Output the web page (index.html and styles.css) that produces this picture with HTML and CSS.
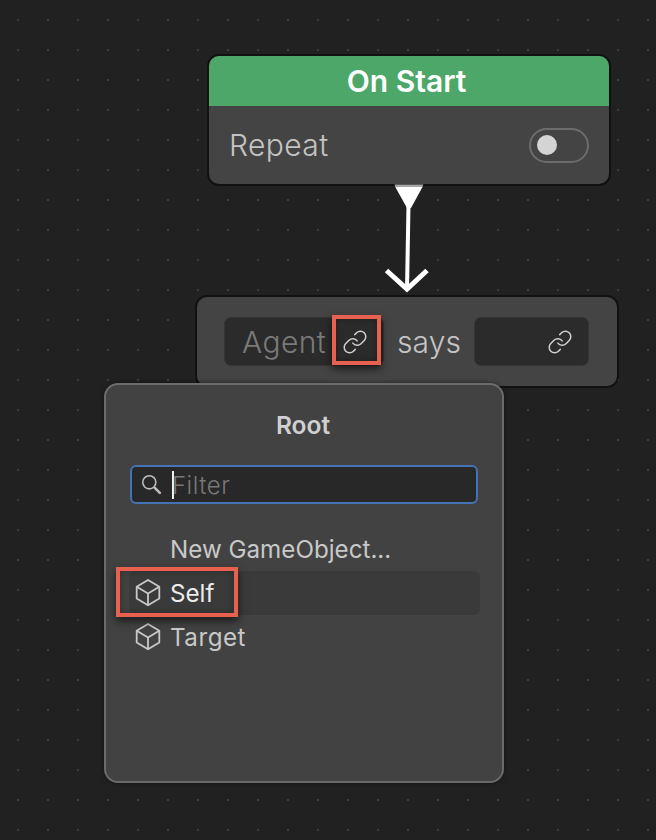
FILE: index.html
```html
<!DOCTYPE html>
<html lang="en">
<head>
<meta charset="utf-8">
<title>Behavior graph</title>
<link rel="stylesheet" href="styles.css">
</head>
<body>
<main class="canvas">
  <section class="node node-start">
    <header class="node-title">On Start</header>
    <div class="node-row">
      <span class="node-label">Repeat</span>
      <span class="toggle"><span class="toggle-knob"></span></span>
    </div>
  </section>

  <svg class="edge" width="70" height="125" viewBox="0 0 70 125" aria-hidden="true">
    <path class="port-top" d="M24.500 9.500H53.300L52.500 12H25.300Z"/>
    <path class="port" d="M25.300 12H52.500L41 33H37Z"/>
    <path class="edge-line" d="M38.500 30L37 115"/>
    <path class="edge-head" d="M16.500 95.500L37 114L57 95.500"/>
  </svg>

  <section class="node node-say">
    <div class="field field-agent">
      <span class="field-text">Agent</span>
      <svg class="link-icon" viewBox="0 0 24 24" aria-hidden="true"><path d="M10 13a5 5 0 0 0 7.540.540l3-3a5 5 0 0 0-7.070-7.070l-1.720 1.710"/><path d="M14 11a5 5 0 0 0-7.540-.540l-3 3a5 5 0 0 0 7.070 7.070l1.710-1.710"/></svg>
    </div>
    <span class="node-label say-label">says</span>
    <div class="field field-says">
      <svg class="link-icon" viewBox="0 0 24 24" aria-hidden="true"><path d="M10 13a5 5 0 0 0 7.540.540l3-3a5 5 0 0 0-7.070-7.070l-1.720 1.710"/><path d="M14 11a5 5 0 0 0-7.540-.540l-3 3a5 5 0 0 0 7.070 7.070l1.710-1.710"/></svg>
    </div>
  </section>

  <section class="popup">
    <h2 class="popup-title">Root</h2>
    <div class="filter">
      <svg class="search-icon" viewBox="0 0 24 24" aria-hidden="true"><circle cx="9.500" cy="9.500" r="7.500"/><path class="search-handle" d="M15.500 15.500L21.500 21.500"/></svg>
      <span class="caret"></span>
      <span class="filter-text">Filter</span>
    </div>
    <ul class="list">
      <li class="list-item"><span class="item-icon"></span>New GameObject...</li>
      <li class="list-item is-hover">
        <svg class="item-icon" viewBox="0 0 28 28" aria-hidden="true"><path d="M13 1L24.300 7.700V19.500L13 26.300L1.700 19.500V7.700Z"/><path d="M1.700 7.700L13 14.500L24.300 7.700M13 14.500V26.300"/></svg>
        <span class="item-bright">Self</span>
      </li>
      <li class="list-item">
        <svg class="item-icon" viewBox="0 0 28 28" aria-hidden="true"><path d="M13 1L24.300 7.700V19.500L13 26.300L1.700 19.500V7.700Z"/><path d="M1.700 7.700L13 14.500L24.300 7.700M13 14.500V26.300"/></svg>
        <span class="item-wide">Target</span>
      </li>
    </ul>
  </section>

  <div class="mark mark-link"></div>
  <div class="mark mark-self"></div>
</main>
</body>
</html>
```
FILE: styles.css
```css
* { box-sizing: border-box; }
html, body { margin: 0; height: 100%; }
body {
  background-color: #212121;
  font-family: Inter, "Liberation Sans", sans-serif;
  overflow: hidden;
}
.canvas {
  position: relative;
  width: 656px;
  height: 840px;
  background-image: radial-gradient(circle at 18px 20px, #3e3e3e 0.9px, transparent 1.1px);
  background-size: 30px 30px;
}
.node {
  position: absolute;
  background: #444444;
  border: 2px solid #111111;
  border-radius: 12px;
}
.node-start { left: 207px; top: 54px; width: 404px; height: 132px; overflow: hidden; }
.node-title {
  height: 50px;
  padding-right: 5px;
  background: #4ca768;
  color: #ffffff;
  font-size: 30px;
  font-weight: 600;
  display: flex;
  align-items: center;
  justify-content: center;
}
.node-row {
  display: flex;
  align-items: center;
  justify-content: space-between;
  height: 78px;
  padding: 0 20px;
}
.node-label {
  color: #c4c4c4;
  font-size: 30px;
  font-weight: 300;
  letter-spacing: 0.4px;
}
.toggle {
  display: flex;
  align-items: center;
  width: 60px;
  height: 35px;
  padding-left: 6px;
  border: 2px solid #6c6c6c;
  border-radius: 18px;
}
.toggle-knob { width: 20px; height: 20px; border-radius: 50%; background: #d4d4d4; }
.edge { position: absolute; left: 370px; top: 175px; }
.port-top { fill: #a8a8a8; }
.port { fill: #ffffff; }
.edge-line { stroke: #ffffff; stroke-width: 4px; fill: none; }
.edge-head { stroke: #ffffff; stroke-width: 5px; fill: none; }
.node-say {
  left: 195px;
  top: 295px;
  width: 424px;
  height: 93px;
  display: flex;
  align-items: center;
  padding: 0 28px 0 27px;
}
.field {
  display: flex;
  align-items: center;
  height: 49px;
  background: #2b2b2b;
  border: 1px solid #353535;
  border-radius: 7px;
}
.field-agent { width: 160px; padding: 0 15px 0 17px; justify-content: space-between; }
.field-says { width: 115px; margin-left: auto; padding-right: 15px; justify-content: flex-end; }
.field-text { color: #7a7a7a; font-size: 30px; font-weight: 300; letter-spacing: 0.4px; }
.say-label { margin-left: 13px; letter-spacing: 0.1px; }
.link-icon { width: 26px; height: 26px; fill: none; stroke: #cfcfcf; stroke-width: 1.400; stroke-linecap: round; stroke-linejoin: round; }
.popup {
  position: absolute;
  left: 104px;
  top: 383px;
  width: 400px;
  height: 400px;
  background: #424242;
  border: 2px solid #6b6b6b;
  border-radius: 14px;
  box-shadow: 0 0 4px rgba(0, 0, 0, 0.5);
  padding: 0 23px;
}
.popup-title {
  margin: 25px 2px 0 0;
  height: 30px;
  line-height: 30px;
  text-align: center;
  font-size: 24.500px;
  font-weight: 600;
  color: #d0d0d0;
}
.filter {
  display: flex;
  align-items: center;
  margin: 25px 1px 0 1px;
  width: 348px;
  height: 39px;
  padding-left: 9px;
  background: #282828;
  border: 2px solid #4473b3;
  border-radius: 6px;
}
.search-icon { width: 21px; height: 21px; fill: none; stroke: #bdbdbd; stroke-width: 1.800; stroke-linecap: round; }
.search-handle { stroke-width: 3px; }
.caret { width: 2px; height: 28px; margin-left: 10px; background: #f0f0f0; }
.filter-text { margin: 2px 0 0 -2px; color: #787878; font-size: 24px; font-weight: 300; letter-spacing: 0.5px; }
.list { list-style: none; margin: 23px 0 0; padding: 0; }
.list-item {
  display: flex;
  align-items: center;
  height: 44px;
  width: 351px;
  padding-left: 6px;
  font-size: 24.200px;
  font-weight: 400;
  color: #c8c8c8;
  border-radius: 6px;
}
.list-item.is-hover { background: #3a3a3a; }
.item-bright { color: #ececec; }
.item-wide { letter-spacing: 0.5px; }
.item-icon { flex: none; width: 28px; height: 28px; margin-right: 7px; fill: none; stroke: #c8c8c8; stroke-width: 1.800; stroke-linejoin: round; }
.mark {
  position: absolute;
  border: 4px solid #e8604f;
  box-shadow: 0 4px 8px rgba(0, 0, 0, 0.6), inset 0 0 6px rgba(0, 0, 0, 0.3);
}
.mark-link { left: 332px; top: 315px; width: 49px; height: 50px; }
.mark-self { left: 116px; top: 567px; width: 122px; height: 50px; }
```
